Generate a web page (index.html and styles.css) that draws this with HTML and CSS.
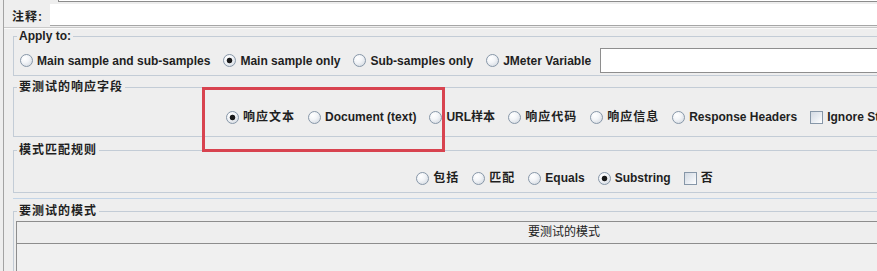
FILE: index.html
```html
<!DOCTYPE html>
<html lang="zh">
  <head>
    <title>响应断言</title>
    <meta name="viewport" content="width=device-width, initial-scale=1.0">
    <link rel="stylesheet" href="styles.css">
  </head>
  <body>
    <div class="panel">
      <div class="name-field"></div>
      <div class="comment-row">
        <span class="comment-label cn">注释:</span>
        <div class="comment-input"></div>
      </div>
      <div class="sep"></div>

      <fieldset class="group group-apply">
        <legend>Apply to:</legend>
        <div class="options options-left">
          <label class="opt"><span class="radio"></span>Main sample and sub-samples</label>
          <label class="opt"><span class="radio checked"></span>Main sample only</label>
          <label class="opt"><span class="radio"></span>Sub-samples only</label>
          <label class="opt opt-tight"><span class="radio"></span>JMeter Variable</label>
          <div class="var-input"></div>
        </div>
      </fieldset>

      <fieldset class="group group-field">
        <legend class="cn">要测试的响应字段</legend>
        <div class="options options-center">
          <label class="opt"><span class="radio checked"></span><span class="cn">响应文本</span></label>
          <label class="opt"><span class="radio"></span>Document (text)</label>
          <label class="opt"><span class="radio"></span>URL样本</label>
          <label class="opt"><span class="radio"></span><span class="cn">响应代码</span></label>
          <label class="opt"><span class="radio"></span><span class="cn">响应信息</span></label>
          <label class="opt"><span class="radio"></span>Response Headers</label>
          <label class="opt"><span class="checkbox"></span>Ignore Status</label>
        </div>
      </fieldset>

      <fieldset class="group group-rule">
        <legend class="cn">模式匹配规则</legend>
        <div class="options options-center">
          <label class="opt"><span class="radio"></span><span class="cn">包括</span></label>
          <label class="opt"><span class="radio"></span><span class="cn">匹配</span></label>
          <label class="opt"><span class="radio"></span>Equals</label>
          <label class="opt"><span class="radio checked"></span>Substring</label>
          <label class="opt"><span class="checkbox"></span><span class="cn">否</span></label>
        </div>
      </fieldset>

      <div class="blue-line"></div>

      <fieldset class="group group-patterns">
        <legend class="cn">要测试的模式</legend>
        <div class="pattern-table">
          <div class="pattern-head">要测试的模式</div>
          <div class="pattern-body"></div>
        </div>
      </fieldset>
    </div>

    <div class="highlight"></div>
  </body>
</html>
```

FILE: styles.css
```css
html, body {
  margin: 0;
  overflow: hidden;
}
body {
  background-color: #eeeeee;
  color: #1f1f1f;
  font-family: "Liberation Sans", "Noto Sans CJK SC", sans-serif;
  font-size: 12px;
  font-weight: bold;
  width: 877px;
  height: 271px;
  position: relative;
}
.cn {
  letter-spacing: 1px;
}
.panel {
  margin-left: 3px;
  width: 1130px;
  min-height: 271px;
  border-left: 1px solid #a3a3a3;
}
.name-field {
  margin-left: 54px;
  height: 1px;
  background-color: #fff;
  border-left: 1px solid #8c8c8c;
  border-bottom: 1px solid #8c8c8c;
}
.comment-row {
  display: flex;
  align-items: center;
  margin-top: 2px;
  padding-left: 8px;
  height: 22px;
}
.comment-label {
  width: 38px;
  flex: none;
}
.comment-input {
  flex: 1;
  height: 21px;
  background-color: #fff;
  border-bottom: 1px solid #a6a6a6;
}
.sep {
  margin-top: 1px;
  border-top: 1px solid #c9c9c9;
  border-bottom: 1px solid #fafafa;
}
.group {
  box-sizing: border-box;
  width: 1104px;
  margin: 0 0 0 9px;
  padding: 0;
  min-inline-size: 0;
  border: 1px solid #c3ccd6;
}
.group legend {
  margin-left: 3px;
  padding: 0 2px;
  line-height: 14px;
}
.group-apply {
  padding-bottom: 2px;
}
.group-field {
  margin-top: 4px;
  padding-bottom: 11px;
}
.group-rule {
  margin-top: 6px;
  padding-bottom: 6px;
}
.group-patterns {
  margin-top: 5px;
  border-bottom: none;
}
.options {
  display: flex;
  align-items: center;
  white-space: nowrap;
}
.options-left {
  margin-top: 5px;
  height: 25px;
  padding-left: 6px;
}
.options-left .opt {
  margin-right: 13px;
}
.options-left .opt-tight {
  margin-right: 0;
}
.options-center {
  justify-content: center;
  height: 16px;
}
.options-center .opt {
  margin-right: 13px;
}
.options-center .opt:last-child {
  margin-right: 0;
}
.group-field .options-center {
  margin-top: 15px;
}
.group-rule .options-center {
  margin-top: 13px;
}
.opt {
  display: flex;
  align-items: center;
  line-height: 16px;
  margin-right: 14px;
}
.radio {
  flex: none;
  width: 11px;
  height: 11px;
  margin-right: 4px;
  border: 1px solid #8797a8;
  border-radius: 50%;
  background: radial-gradient(circle at 35% 30%, #ffffff 0%, #f3f5f8 40%, #cdd4dc 100%);
}
.radio.checked {
  background: radial-gradient(circle, #1a1a1a 0, #1a1a1a 2.4px, rgba(0, 0, 0, 0) 3.2px),
    radial-gradient(circle at 35% 30%, #ffffff 0%, #f3f5f8 40%, #cdd4dc 100%);
}
.checkbox {
  flex: none;
  width: 11px;
  height: 11px;
  margin-right: 4px;
  border: 1px solid #8797a8;
  background: linear-gradient(135deg, #d3dae3 0%, #e9edf2 55%, #ffffff 100%);
}
.var-input {
  flex: 1;
  height: 23px;
  margin-left: 9px;
  background-color: #fff;
  border: 1px solid #8e8e8e;
}
.blue-line {
  margin: 5px 0 0 9px;
  width: 1104px;
  height: 1px;
  background-color: #c3d4e6;
}
.pattern-table {
  margin: 3px 4px 0 2px;
  border: 1px solid #8d8d8d;
  border-bottom: none;
}
.pattern-head {
  height: 21px;
  line-height: 21px;
  text-align: center;
  font-weight: normal;
  color: #222;
  border-bottom: 1px solid #8d8d8d;
}
.pattern-body {
  height: 60px;
  background-color: #f0f0f0;
}
.highlight {
  position: absolute;
  left: 202px;
  top: 87px;
  width: 237px;
  height: 59px;
  border: 3px solid #d8434f;
}
```
